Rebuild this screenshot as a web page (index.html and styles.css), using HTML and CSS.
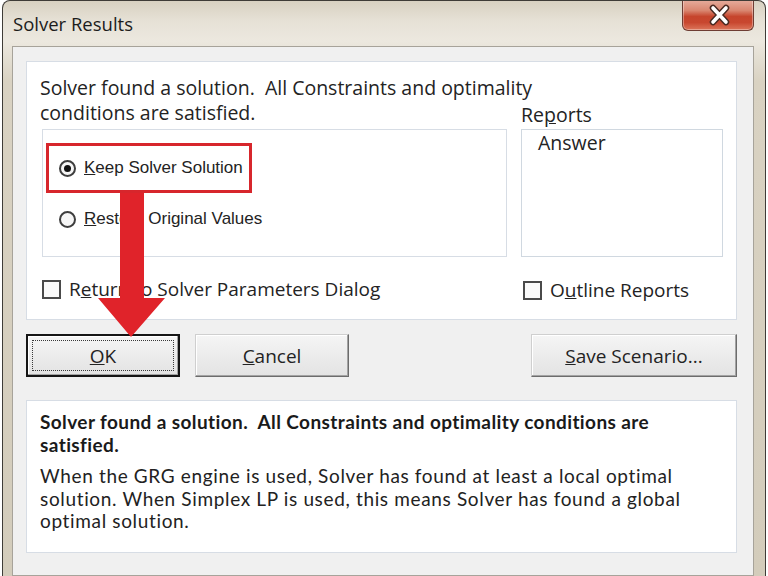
FILE: index.html
```html
<!DOCTYPE html>
<html>
<head>
<meta charset="utf-8">
<title>Solver Results</title>
<link rel="stylesheet" href="styles.css">
</head>
<body>
<div class="window">
  <div class="titlebar">
    <div class="title">Solver Results</div>
    <div class="close">
      <svg width="72" height="31" viewBox="0 0 72 31">
        <path d="M31 9 L44 23 M44 9 L31 23" stroke="#4a2a22" stroke-width="6.5" stroke-linecap="round"/>
        <path d="M31 9 L44 23 M44 9 L31 23" stroke="#ffffff" stroke-width="3.6" stroke-linecap="round"/>
      </svg>
    </div>
  </div>
  <div class="client">
    <div class="panel top-panel">
      <div class="grid">
        <div class="intro">Solver found a solution.&nbsp; All Constraints and optimality<br>conditions are satisfied.</div>
        <div class="reports-label">Re<u>p</u>orts</div>
        <div class="radio-box">
          <div class="radio-row"><span class="radio checked"></span><span class="opt"><u>K</u>eep Solver Solution</span></div>
          <div class="radio-row"><span class="radio"></span><span class="opt"><u>R</u>estore Original Values</span></div>
        </div>
        <div class="list-box"><div class="list-item">Answer</div></div>
        <div class="check-row left-check"><span class="check"></span><span>R<u>e</u>turn to Solver Parameters Dialog</span></div>
        <div class="check-row right-check"><span class="check"></span><span>O<u>u</u>tline Reports</span></div>
      </div>
    </div>
    <div class="buttons">
      <div class="btn default"><span class="focus"><u>O</u>K</span></div>
      <div class="btn cancel"><u>C</u>ancel</div>
      <div class="btn save"><u>S</u>ave Scenario...</div>
    </div>
    <div class="panel msg-panel">
      <div class="msg-bold">Solver found a solution.&nbsp; All Constraints and optimality conditions are satisfied.</div>
      <div class="msg-text">When the GRG engine is used, Solver has found at least a local optimal solution. When Simplex LP is used, this means Solver has found a global optimal solution.</div>
    </div>
  </div>
  <div class="highlight"></div>
  <svg class="arrow" width="80" height="150" viewBox="0 0 80 150">
    <polygon points="22,0 46,0 46,105 67,105 33,144 0,105 22,105" fill="#e0232a"/>
  </svg>
</div>
</body>
</html>
```
FILE: styles.css
```css
html, body {
  margin: 0;
  padding: 0;
  background: #ffffff;
  width: 768px;
  height: 576px;
  overflow: hidden;
}
body {
  font-family: "Open Sans", "Liberation Sans", sans-serif;
  color: #232323;
}
.window {
  position: relative;
  box-sizing: border-box;
  margin-left: 2px;
  width: 764px;
  height: 576px;
  border: 1px solid #3f3c37;
  border-bottom: none;
  border-radius: 8px 8px 0 0;
  padding: 0 11px 0 9px;
  overflow: hidden;
  background: linear-gradient(180deg, #d8d1c1 0px, #e6e1d6 20px, #ece8df 40px, #d9d2c2 80px, #d3ccbb 100%);
}
.titlebar {
  height: 45px;
  display: flex;
  justify-content: space-between;
  align-items: flex-start;
}
.title {
  padding-top: 11px;
  padding-left: 1px;
  font-size: 18.5px;
  line-height: 24px;
  color: #1c1c1c;
}
.close {
  width: 72px;
  height: 31px;
  margin-top: -1px;
  box-sizing: border-box;
  border: 1px solid #6e3d33;
  border-top: none;
  border-radius: 0 0 6px 6px;
  background: linear-gradient(180deg, #e6ad9d 0%, #d98670 35%, #c6452d 55%, #c8472f 75%, #dc765b 100%);
  box-shadow: inset 0 0 0 1px rgba(255,255,255,0.35);
  overflow: hidden;
}
.close svg { display: block; margin: -1px 0 0 -1px; }
.client {
  box-sizing: border-box;
  height: 530px;
  background: #f0f0f0;
  border: 1px solid #a7a39a;
  padding: 14px 16px 0 13px;
}
.panel {
  background: #ffffff;
  border: 1px solid #d7dde5;
  box-sizing: border-box;
  width: 711px;
}
.top-panel {
  height: 259px;
  padding: 13px 0 0 15px;
}
.grid {
  display: grid;
  grid-template-columns: 465px 202px;
  column-gap: 14px;
}
.intro {
  font-size: 19.5px;
  line-height: 25px;
  white-space: nowrap;
  margin-left: -2px;
  margin-bottom: 4px;
}
.reports-label {
  align-self: end;
  font-size: 19.5px;
  line-height: 25px;
  margin-bottom: 2px;
}
.radio-box {
  height: 128px;
  box-sizing: border-box;
  border: 1px solid #d7dde5;
  padding: 25px 0 0 16px;
  display: flex;
  flex-direction: column;
  gap: 25px;
}
.radio-row {
  display: flex;
  align-items: center;
  height: 26px;
  font-family: "Liberation Sans", Arial, sans-serif;
  font-size: 17px;
}
.radio {
  width: 17px;
  height: 17px;
  box-sizing: border-box;
  border: 2px solid #3e3e3e;
  border-radius: 50%;
  background: #f6f6f6;
  margin-right: 8px;
  display: flex;
  align-items: center;
  justify-content: center;
}
.radio.checked::after {
  content: "";
  width: 7px;
  height: 7px;
  border-radius: 50%;
  background: #111;
}
.list-box {
  height: 128px;
  box-sizing: border-box;
  border: 1px solid #d0d8e0;
  padding: 0 0 0 16px;
}
.list-item {
  font-size: 19.5px;
  line-height: 26px;
}
.check-row {
  display: flex;
  align-items: center;
  height: 26px;
  margin-top: 19px;
  font-size: 19px;
}
.right-check { margin-left: 2px; margin-top: 20px; }
.check {
  width: 19px;
  height: 19px;
  box-sizing: border-box;
  border: 2px solid #4a4a4a;
  background: #fafafa;
  margin-right: 8px;
  flex: none;
}
.buttons {
  display: flex;
  width: 711px;
  margin-top: 14px;
  height: 43px;
}
.btn {
  box-sizing: border-box;
  height: 43px;
  display: flex;
  align-items: center;
  justify-content: center;
  font-size: 19px;
  background: linear-gradient(180deg, #f5f5f5 0%, #ececec 50%, #e3e3e3 100%);
  border: 1px solid;
  border-color: #cfcfcf #6c6c6c #6c6c6c #cfcfcf;
  box-shadow: inset -1px -1px 0 #a3a3a3, inset 1px 1px 0 #ffffff;
}
.btn.default {
  width: 154px;
  border: 2px solid #151515;
  padding: 4px;
}
.btn.default .focus {
  flex: 1;
  align-self: stretch;
  display: flex;
  align-items: center;
  justify-content: center;
  border: 1px dotted #3a3a3a;
}
.btn.cancel {
  width: 154px;
  margin-left: 15px;
}
.btn.save {
  width: 206px;
  margin-left: auto;
}
.msg-panel {
  margin-top: 23px;
  height: 153px;
  padding: 9px 10px 0 13px;
  font-family: "Lato", "Liberation Sans", sans-serif;
  font-size: 19px;
  letter-spacing: 0.65px;
  color: #222;
}
.msg-bold {
  font-weight: bold;
  line-height: 23px;
  letter-spacing: 0.4px;
  color: #1a1a1a;
}
.msg-text {
  margin-top: 9px;
  line-height: 22.5px;
}
.highlight {
  position: absolute;
  left: 43px;
  top: 142px;
  width: 206px;
  height: 50px;
  box-sizing: border-box;
  border: 3px solid #d7262c;
}
.arrow {
  position: absolute;
  left: 95px;
  top: 192px;
}
```
